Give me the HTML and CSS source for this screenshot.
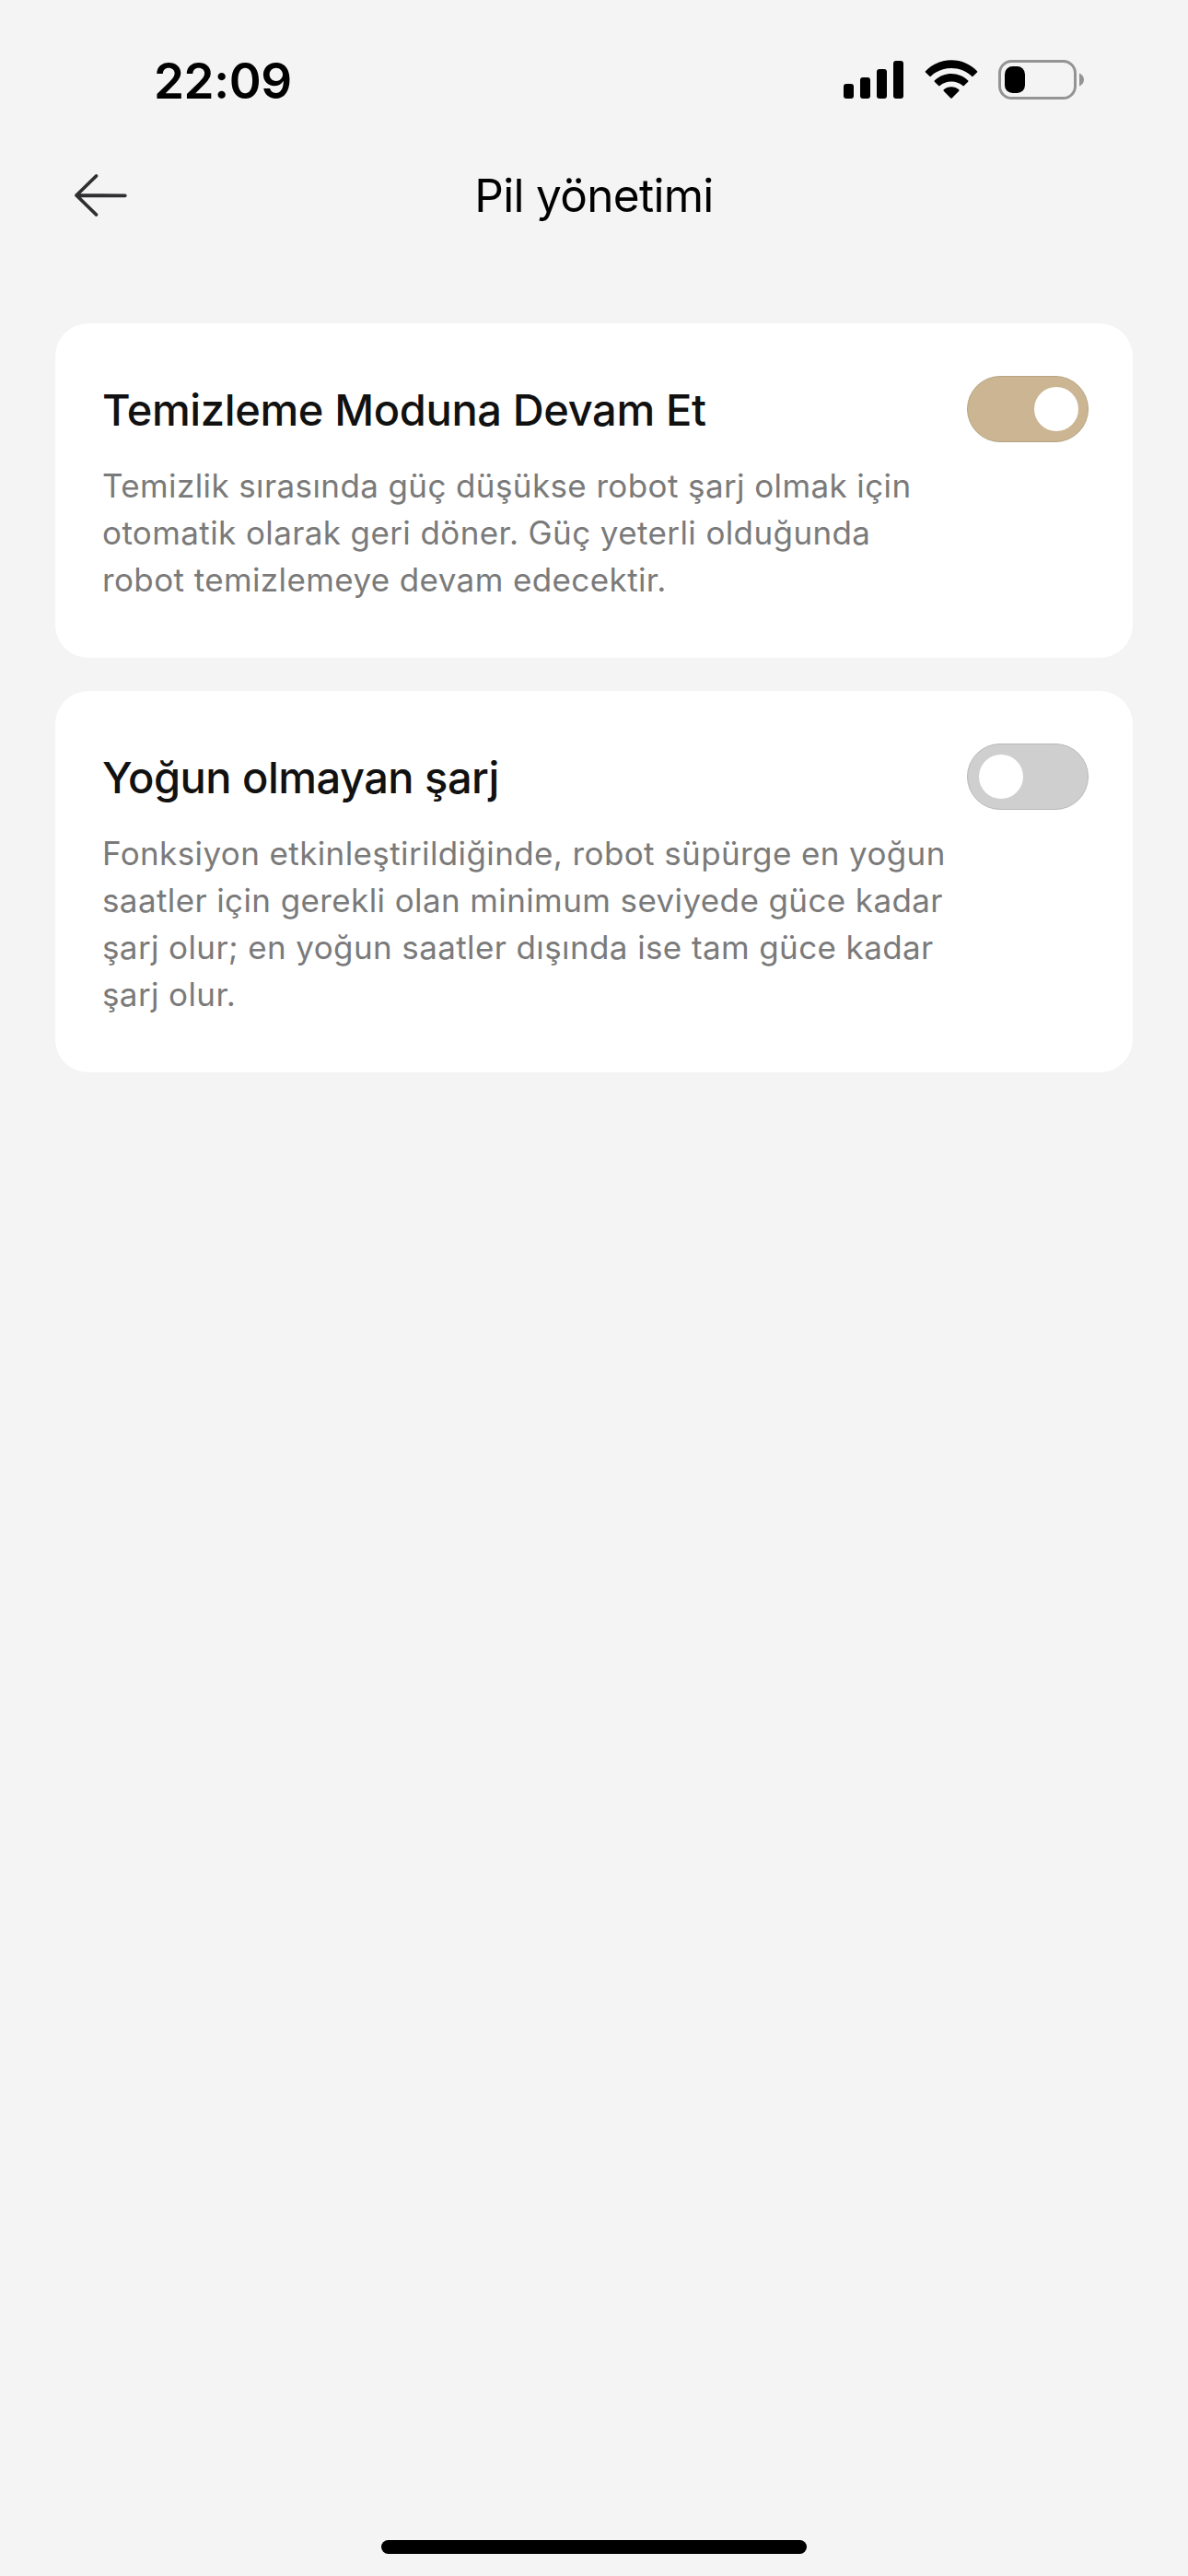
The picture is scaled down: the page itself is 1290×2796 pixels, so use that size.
FILE: index.html
```html
<!DOCTYPE html>
<html lang="tr">
<head>
<meta charset="utf-8">
<title>Pil yönetimi</title>
<link rel="stylesheet" href="styles.css">
</head>
<body>
<div class="screen">
  <div class="status-bar">
    <div class="time">22:09</div>
    <div class="status-icons">
      <svg class="signal" width="65" height="41" viewBox="0 0 65 41">
        <rect x="0" y="25" width="11" height="16" rx="3"/>
        <rect x="18" y="18" width="11" height="23" rx="3"/>
        <rect x="36" y="9" width="11" height="32" rx="3"/>
        <rect x="54" y="0" width="11" height="41" rx="3"/>
      </svg>
      <svg class="wifi" width="58" height="43" viewBox="0 0 58 43">
        <path d="M1 12.2C8 4.800 18 .3 29 .3S50 4.800 57 12.200Q57.600 12.900 57 13.600L52.600 17.800Q51.900 18.500 51.200 17.800C45.300 12.100 37.500 9 29 9S12.700 12.100 6.800 17.800Q6.100 18.500 5.400 17.800L1 13.600Q.4 12.900 1 12.200Z"/>
        <path d="M10.800 22.400C15.500 17.800 22 15 29 15S42.500 17.800 47.200 22.400Q47.900 23.100 47.200 23.800L42.800 28.100Q42.100 28.700 41.400 28.100C38.100 25.200 33.800 23.600 29 23.600S19.900 25.200 16.600 28.100Q15.900 28.700 15.200 28.100L10.800 23.800Q10.100 23.100 10.800 22.400Z"/>
        <path d="M20.800 32.300C23 30.300 25.900 29.200 29 29.200S35 30.300 37.200 32.300Q38 33 37.300 33.800L29.700 41.500Q29 42.200 28.300 41.500L20.700 33.800Q20 33 20.800 32.300Z"/>
      </svg>
      <svg class="battery" width="94" height="43" viewBox="0 0 94 43">
        <rect x="1.500" y="1.500" width="82" height="40" rx="13" fill="none" stroke="#949494" stroke-width="3"/>
        <path d="M88 14.500C91 15.700 93 18.300 93 21.500S91 27.300 88 28.500Z" fill="#949494"/>
        <rect x="7" y="7" width="22" height="29" rx="8.500"/>
      </svg>
    </div>
  </div>
  <header class="nav">
    <svg class="back" width="60" height="48" viewBox="0 0 60 48" fill="none" stroke="#2f2f31" stroke-width="3.800" stroke-linecap="round" stroke-linejoin="round">
      <path d="M26.500 3 5 24 26.500 45M5 24 57.800 24.300"/>
    </svg>
    <h1 class="nav-title">Pil yönetimi</h1>
  </header>
  <main class="cards">
    <section class="card">
      <div class="card-text">
        <h2 class="card-title">Temizleme Moduna Devam Et</h2>
        <p class="card-desc">Temizlik sırasında güç düşükse robot şarj olmak için<br>otomatik olarak geri döner. Güç yeterli olduğunda<br>robot temizlemeye devam edecektir.</p>
      </div>
      <div class="toggle toggle-on"><div class="knob"></div></div>
    </section>
    <section class="card">
      <div class="card-text">
        <h2 class="card-title card-title-tight">Yoğun olmayan şarj</h2>
        <p class="card-desc">Fonksiyon etkinleştirildiğinde, robot süpürge en yoğun<br>saatler için gerekli olan minimum seviyede güce kadar<br>şarj olur; en yoğun saatler dışında ise tam güce kadar<br>şarj olur.</p>
      </div>
      <div class="toggle"><div class="knob"></div></div>
    </section>
  </main>
  <div class="home-indicator"></div>
</div>
</body>
</html>
```
FILE: styles.css
```css
* {
  box-sizing: border-box;
}

body {
  margin: 0;
  background: #f4f4f4;
  font-family: Inter, "Liberation Sans", sans-serif;
  color: #000;
}

.screen {
  display: flex;
  flex-direction: column;
  width: 1290px;
  height: 2796px;
  overflow: hidden;
}

.status-bar {
  display: flex;
  justify-content: space-between;
  height: 141px;
  padding: 65px 112px 0 167px;
}

.time {
  height: 46px;
  font-size: 53px;
  font-weight: 600;
  letter-spacing: -0.4px;
  line-height: 46px;
}

.status-icons {
  display: flex;
  align-items: flex-start;
}

.signal {
  margin: 1px 22.5px 0 0;
}

.wifi {
  margin-right: 22.5px;
}

.nav {
  display: grid;
  grid-template-columns: 120px 1fr 120px;
  align-items: center;
  height: 142px;
  padding: 0 78px;
}

.nav-title {
  margin: 0;
  font-size: 49.5px;
  font-weight: 400;
  letter-spacing: -0.7px;
  line-height: 60px;
  text-align: center;
}

.cards {
  display: flex;
  flex: 1;
  flex-direction: column;
  gap: 36px;
  padding: 68px 60px 0;
}

.card {
  display: flex;
  justify-content: space-between;
  align-items: flex-start;
  padding: 57px 48px 57px 51px;
  border-radius: 36px;
  background: #fff;
}

.card-title {
  margin: 0;
  color: #111;
  font-size: 47px;
  font-weight: 500;
  letter-spacing: -0.36px;
  line-height: 74px;
}

.card-title-tight {
  letter-spacing: -0.52px;
}

.card-desc {
  margin: 20px 0 0;
  padding-bottom: 2px;
  color: #7a7a7a;
  font-size: 35px;
  letter-spacing: 0.39px;
  line-height: 51px;
  white-space: nowrap;
}

.toggle {
  display: flex;
  flex: none;
  align-items: center;
  width: 132px;
  height: 72px;
  padding: 0 10px 0 12px;
  border: 1px solid #b8b8b8;
  border-radius: 36px;
  background: #cfcfcf;
}

.toggle-on {
  justify-content: flex-end;
  border-color: #b7a482;
  background: #cbb592;
}

.knob {
  width: 48px;
  height: 48px;
  border-radius: 50%;
  background: #fff;
}

.home-indicator {
  align-self: center;
  width: 462px;
  height: 15px;
  margin-bottom: 24px;
  border-radius: 8px;
  background: #000;
}
```
